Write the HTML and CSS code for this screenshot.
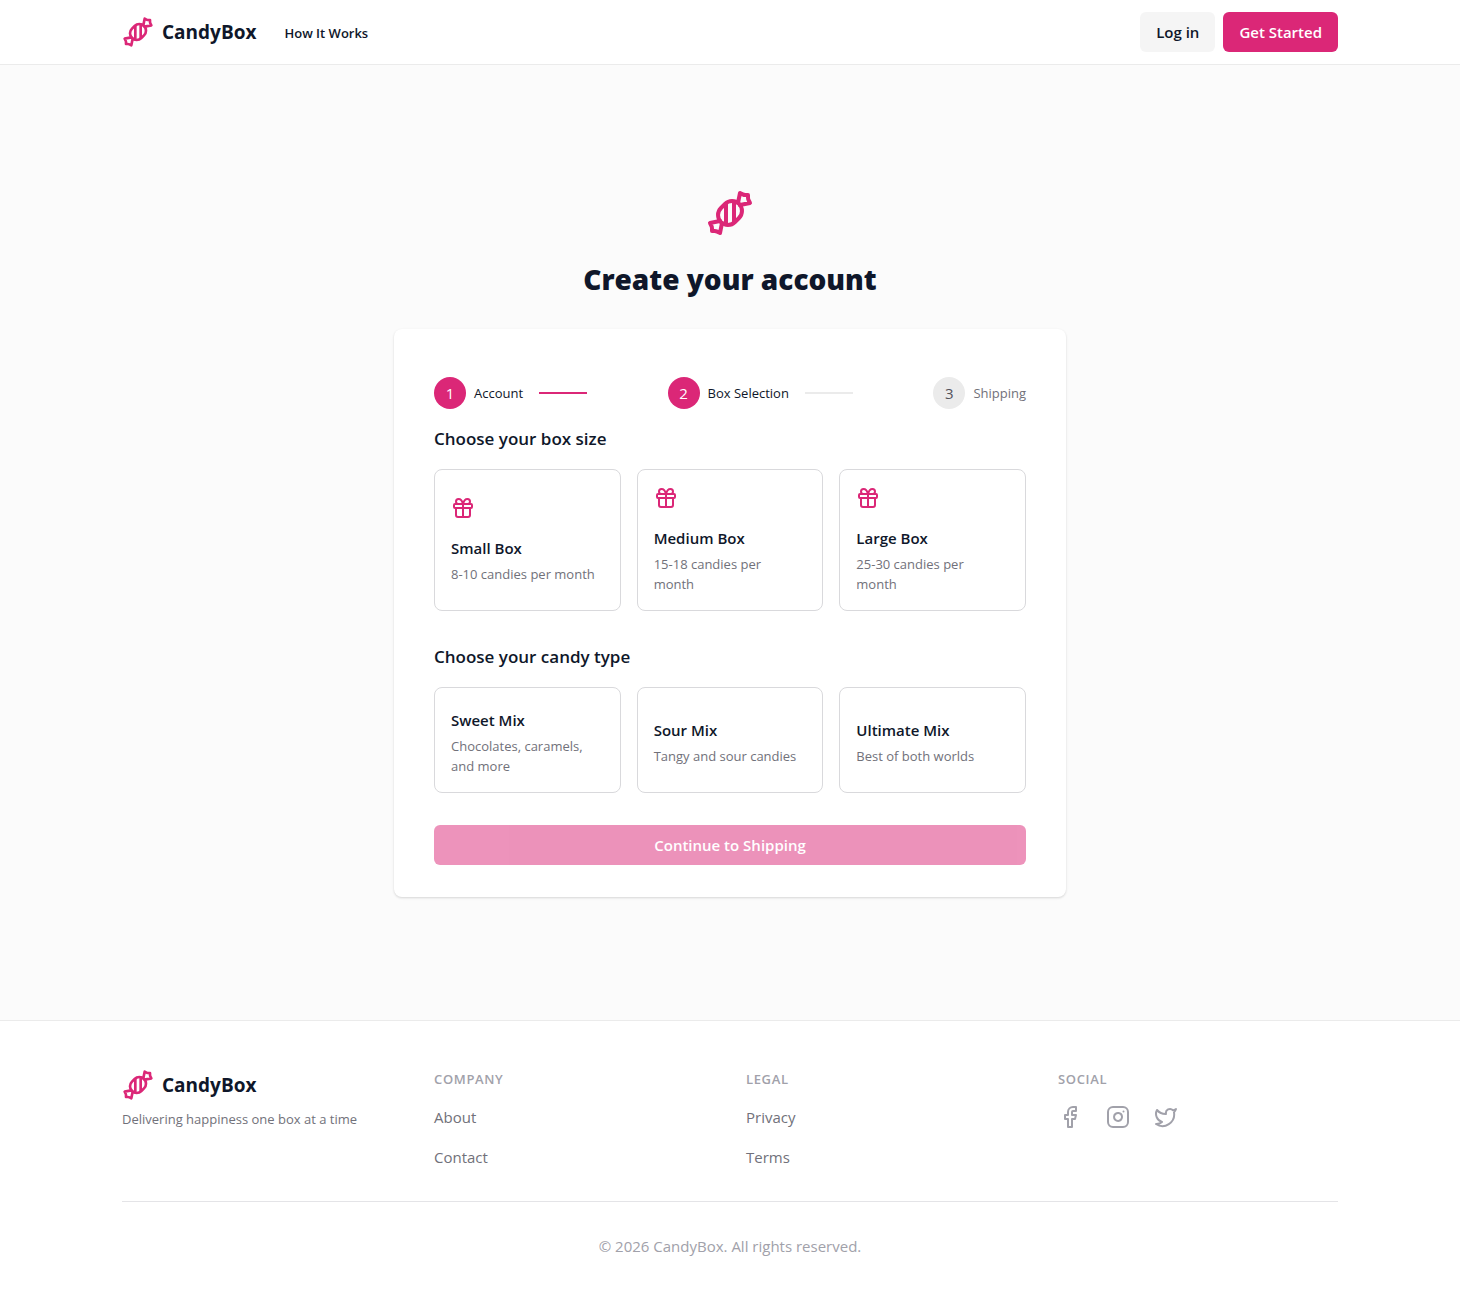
FILE: index.html
```html
<!DOCTYPE html>
<html lang="en">
<head>
    <meta charset="UTF-8">
    <meta name="viewport" content="width=device-width, initial-scale=1.0">
    <title>Create your account - CandyBox</title>
    <link rel="stylesheet" href="styles.css">
</head>
<body>
    <!-- Shared icons -->
    <svg class="sprite" aria-hidden="true">
        <symbol id="icon-candy" viewBox="0 0 24 24">
            <path d="m9.5 7.5-2 2a4.95 4.95 0 1 0 7 7l2-2a4.95 4.95 0 1 0-7-7Z"/>
            <path d="M14 6.5v10"/>
            <path d="M10 7.5v10"/>
            <path d="m16 7 1-5 1.37.68A3 3 0 0 0 19.7 3H21v1.3c0 .46.1.92.32 1.33L22 7l-5 1"/>
            <path d="m8 17-1 5-1.37-.68A3 3 0 0 0 4.3 21H3v-1.3a3 3 0 0 0-.32-1.33L2 17l5-1"/>
        </symbol>
        <symbol id="icon-gift" viewBox="0 0 24 24">
            <rect x="3" y="8" width="18" height="4" rx="1"/>
            <path d="M12 8v13"/>
            <path d="M19 12v7a2 2 0 0 1-2 2H7a2 2 0 0 1-2-2v-7"/>
            <path d="M7.5 8a2.5 2.5 0 0 1 0-5A4.8 8 0 0 1 12 8a4.8 8 0 0 1 4.5-5 2.5 2.5 0 0 1 0 5"/>
        </symbol>
    </svg>

    <header class="header">
        <div class="container header-inner">
            <a class="brand" href="#">
                <svg class="icon brand-icon"><use href="#icon-candy"/></svg>
                <span>CandyBox</span>
            </a>
            <nav class="main-nav">
                <a href="#">How It Works</a>
            </nav>
            <div class="header-actions">
                <button class="btn btn-light" type="button">Log in</button>
                <button class="btn btn-primary" type="button">Get Started</button>
            </div>
        </div>
    </header>

    <main class="main">
        <svg class="icon hero-icon"><use href="#icon-candy"/></svg>
        <h1>Create your account</h1>

        <form class="card">
            <ol class="steps">
                <li class="step active">
                    <span class="step-number">1</span>
                    <span class="step-label">Account</span>
                    <span class="step-line done"></span>
                </li>
                <li class="step active">
                    <span class="step-number">2</span>
                    <span class="step-label">Box Selection</span>
                    <span class="step-line"></span>
                </li>
                <li class="step">
                    <span class="step-number">3</span>
                    <span class="step-label">Shipping</span>
                </li>
            </ol>

            <section class="choice">
                <h2>Choose your box size</h2>
                <div class="options">
                    <button class="option" type="button">
                        <svg class="icon option-icon"><use href="#icon-gift"/></svg>
                        <span class="option-title">Small Box</span>
                        <span class="option-text">8-10 candies per month</span>
                    </button>
                    <button class="option" type="button">
                        <svg class="icon option-icon"><use href="#icon-gift"/></svg>
                        <span class="option-title">Medium Box</span>
                        <span class="option-text">15-18 candies per month</span>
                    </button>
                    <button class="option" type="button">
                        <svg class="icon option-icon"><use href="#icon-gift"/></svg>
                        <span class="option-title">Large Box</span>
                        <span class="option-text">25-30 candies per month</span>
                    </button>
                </div>
            </section>

            <section class="choice">
                <h2>Choose your candy type</h2>
                <div class="options">
                    <button class="option" type="button">
                        <span class="option-title">Sweet Mix</span>
                        <span class="option-text">Chocolates, caramels, and more</span>
                    </button>
                    <button class="option" type="button">
                        <span class="option-title">Sour Mix</span>
                        <span class="option-text">Tangy and sour candies</span>
                    </button>
                    <button class="option" type="button">
                        <span class="option-title">Ultimate Mix</span>
                        <span class="option-text">Best of both worlds</span>
                    </button>
                </div>
            </section>

            <button class="btn btn-primary btn-block" type="submit" disabled>Continue to Shipping</button>
        </form>
    </main>

    <footer class="footer">
        <div class="container">
            <div class="footer-grid">
                <div>
                    <a class="brand" href="#">
                        <svg class="icon brand-icon"><use href="#icon-candy"/></svg>
                        <span>CandyBox</span>
                    </a>
                    <p class="tagline">Delivering happiness one box at a time</p>
                </div>
                <div>
                    <h3>Company</h3>
                    <ul class="footer-links">
                        <li><a href="#">About</a></li>
                        <li><a href="#">Contact</a></li>
                    </ul>
                </div>
                <div>
                    <h3>Legal</h3>
                    <ul class="footer-links">
                        <li><a href="#">Privacy</a></li>
                        <li><a href="#">Terms</a></li>
                    </ul>
                </div>
                <div>
                    <h3>Social</h3>
                    <div class="social">
                        <a href="#" aria-label="Facebook">
                            <svg class="icon" viewBox="0 0 24 24">
                                <path d="M18 2h-3a5 5 0 0 0-5 5v3H7v4h3v8h4v-8h3l1-4h-4V7a1 1 0 0 1 1-1h3z"/>
                            </svg>
                        </a>
                        <a href="#" aria-label="Instagram">
                            <svg class="icon" viewBox="0 0 24 24">
                                <rect x="2" y="2" width="20" height="20" rx="5"/>
                                <path d="M16 11.37A4 4 0 1 1 12.63 8 4 4 0 0 1 16 11.37z"/>
                                <path d="M17.5 6.5h.01"/>
                            </svg>
                        </a>
                        <a href="#" aria-label="Twitter">
                            <svg class="icon" viewBox="0 0 24 24">
                                <path d="M22 4s-.7 2.1-2 3.4c1.6 10-9.4 17.3-18 11.6 2.2.1 4.4-.6 6-2C3 15.5.5 9.6 3 5c2.2 2.6 5.6 4.1 9 4-.9-4.2 4-6.6 7-3.8 1.1 0 3-1.2 3-1.2z"/>
                            </svg>
                        </a>
                    </div>
                </div>
            </div>
            <p class="copyright">© 2026 CandyBox. All rights reserved.</p>
        </div>
    </footer>
</body>
</html>
```

FILE: styles.css
```css
* {
    margin: 0;
    padding: 0;
    box-sizing: border-box;
}

body {
    font-family: 'Segoe UI', 'Open Sans', 'Noto Sans', sans-serif;
    font-size: 15px;
    line-height: 24px;
    color: #0f172a;
    background: #fbfbfb;
    min-height: 100vh;
    display: flex;
    flex-direction: column;
}

a {
    color: inherit;
    text-decoration: none;
}

ul,
ol {
    list-style: none;
}

button {
    font: inherit;
    color: inherit;
    cursor: pointer;
}

.sprite {
    display: none;
}

.icon {
    display: block;
    width: 24px;
    height: 24px;
    fill: none;
    stroke: currentColor;
    stroke-width: 2;
    stroke-linecap: round;
    stroke-linejoin: round;
}

.container {
    width: 100%;
    max-width: 1280px;
    margin: 0 auto;
    padding: 0 32px;
}

/* Header */
.header {
    background: #fff;
    border-bottom: 1px solid #ebebeb;
}

.header-inner {
    height: 64px;
    display: flex;
    align-items: center;
}

.brand {
    display: flex;
    align-items: center;
    gap: 8px;
    font-size: 19px;
    font-weight: 700;
    line-height: 32px;
}

.brand-icon {
    width: 32px;
    height: 32px;
    color: #db2777;
}

.main-nav {
    margin-left: 28px;
    padding-top: 2px;
    font-size: 13px;
    font-weight: 600;
}

.header-actions {
    margin-left: auto;
    display: flex;
    gap: 8px;
}

.btn {
    height: 40px;
    padding: 0 16px;
    border: none;
    border-radius: 6px;
    font-weight: 600;
}

.btn-light {
    background: #f5f5f5;
}

.btn-primary {
    background: #db2777;
    color: #fff;
}

.btn-block {
    width: 100%;
}

.btn:disabled {
    opacity: 0.5;
    cursor: not-allowed;
}

/* Sign up */
.main {
    flex: 1;
    display: flex;
    flex-direction: column;
    align-items: center;
    justify-content: center;
    padding: 48px 32px;
}

.hero-icon {
    width: 48px;
    height: 48px;
    color: #db2777;
}

h1 {
    margin-top: 24px;
    font-size: 28px;
    font-weight: 800;
    line-height: 36px;
}

.card {
    width: 100%;
    max-width: 672px;
    margin-top: 32px;
    padding: 32px 40px;
    background: #fff;
    border-radius: 8px;
    box-shadow: 0 1px 3px rgba(0, 0, 0, 0.1), 0 1px 2px rgba(0, 0, 0, 0.06);
}

.steps {
    display: flex;
    justify-content: space-between;
    padding: 16px 0;
}

.step {
    display: flex;
    align-items: center;
    color: #71717a;
}

.step-number {
    width: 32px;
    height: 32px;
    border-radius: 50%;
    background: #ebebeb;
    color: #52525b;
    line-height: 32px;
    text-align: center;
}

.step-label {
    margin-left: 8px;
    font-size: 13px;
}

.step-line {
    width: 48px;
    height: 2px;
    margin-left: 16px;
    background: #ebebeb;
}

.step.active {
    color: #0f172a;
}

.step.active .step-number {
    background: #db2777;
    color: #fff;
}

.step .step-line.done {
    background: #db2777;
}

.choice {
    margin-bottom: 32px;
}

h2 {
    margin-bottom: 16px;
    font-size: 17px;
    font-weight: 600;
    line-height: 28px;
}

.options {
    display: grid;
    grid-template-columns: repeat(3, 1fr);
    gap: 16px;
}

.option {
    display: flex;
    flex-direction: column;
    justify-content: center;
    padding: 16px 20px 16px 16px;
    border: 1px solid #d9d9dc;
    border-radius: 8px;
    background: #fff;
    text-align: left;
}

.option-icon {
    margin-bottom: 12px;
    color: #db2777;
}

.option-title {
    margin: 4px 0;
    font-weight: 600;
}

.option-text {
    font-size: 13px;
    line-height: 20px;
    color: #71717a;
}

/* Footer */
.footer {
    padding: 48px 0;
    background: #fff;
    border-top: 1px solid #ebebeb;
}

.footer-grid {
    display: grid;
    grid-template-columns: repeat(4, 1fr);
    gap: 32px;
    padding-bottom: 32px;
    border-bottom: 1px solid #e4e4e7;
}

.tagline {
    margin-top: 8px;
    font-size: 13px;
    line-height: 20px;
    color: #71717a;
}

h3 {
    margin-bottom: 16px;
    font-size: 13px;
    font-weight: 600;
    line-height: 20px;
    letter-spacing: 0.05em;
    text-transform: uppercase;
    color: #a1a1aa;
}

.footer-links {
    display: flex;
    flex-direction: column;
    gap: 16px;
    color: #71717a;
}

.social {
    display: flex;
    gap: 24px;
    color: #a1a1aa;
}

.copyright {
    margin-top: 32px;
    text-align: center;
    color: #a1a1aa;
}

@media (max-width: 768px) {
    .options {
        grid-template-columns: 1fr;
    }

    .footer-grid {
        grid-template-columns: repeat(2, 1fr);
    }

    .step-line {
        display: none;
    }
}
```
